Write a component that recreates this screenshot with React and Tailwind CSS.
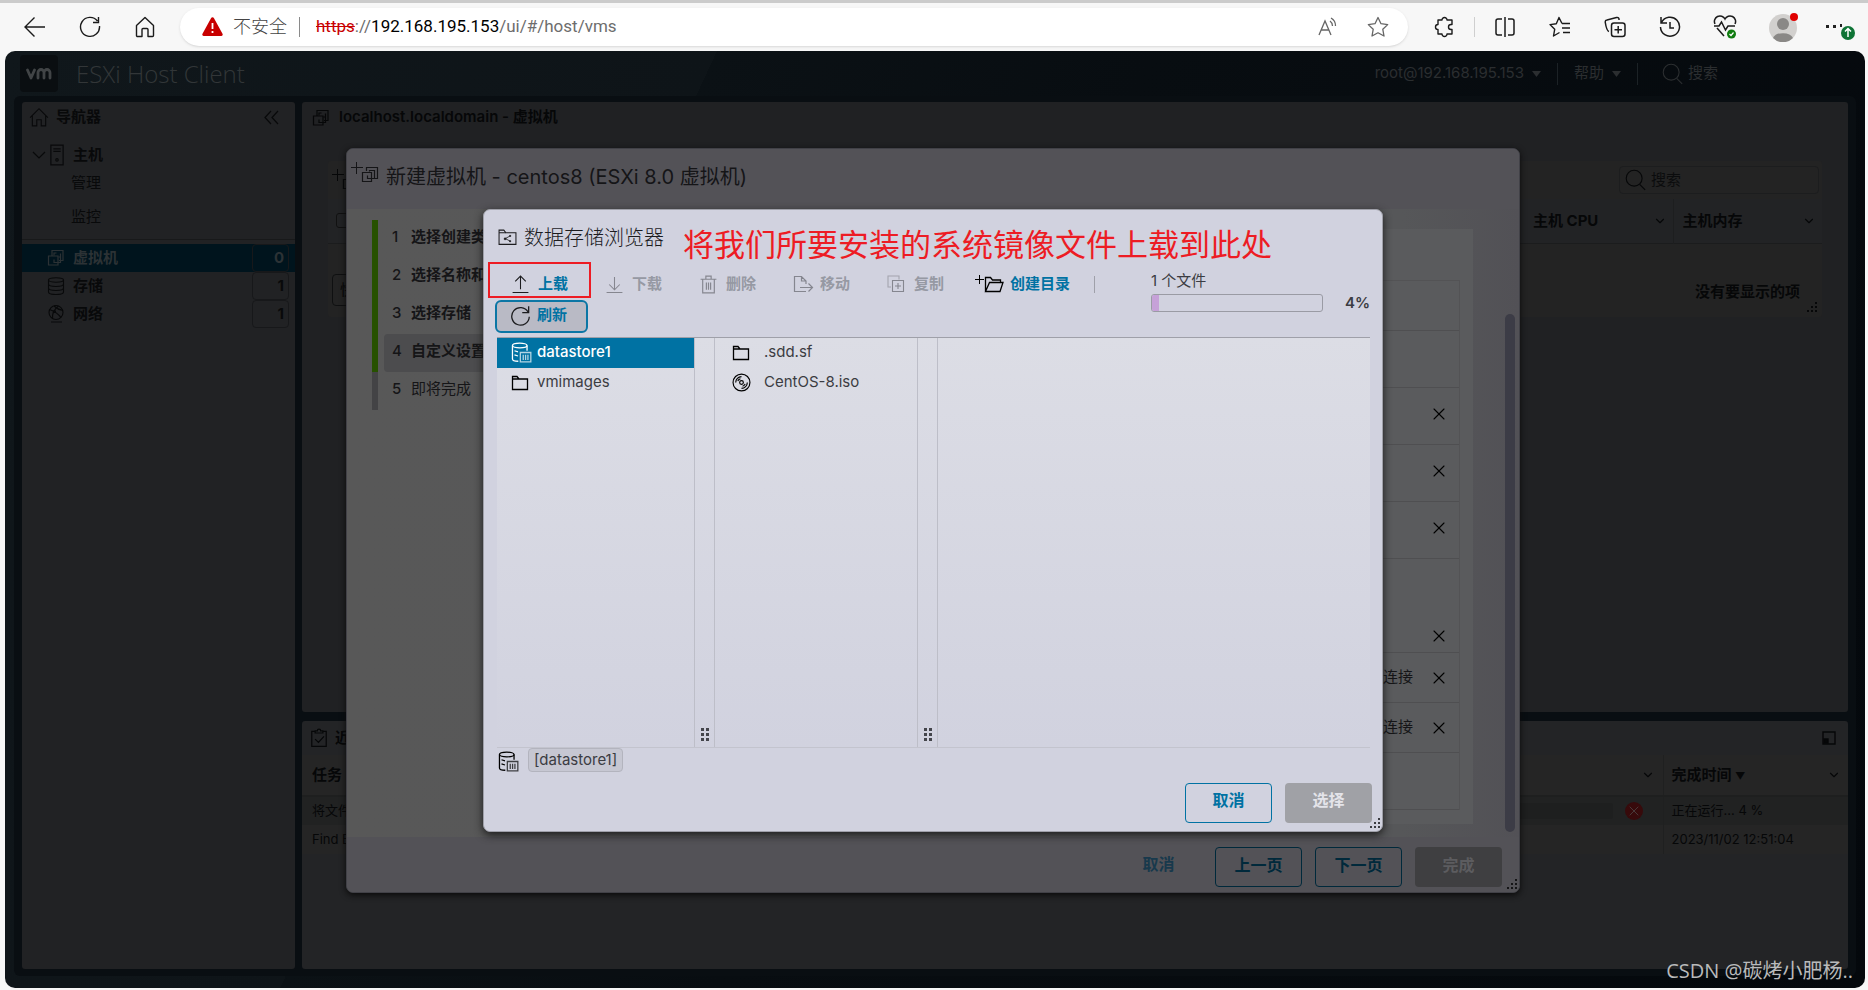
import { ChevronDown, X } from "lucide-react";

function Svg({ size = 18, sw = 2, children, className = "", box = 36 }) {
  return (
    <svg
      width={size}
      height={size}
      viewBox={`0 0 ${box} ${box}`}
      fill="none"
      stroke="currentColor"
      strokeWidth={sw}
      className={`shrink-0 ${className}`}
      aria-hidden="true"
    >
      {children}
    </svg>
  );
}

const VmIcon = ({ size = 18, className }) => (
  <Svg size={size} sw={2.4} className={className}>
    <path d="M10 13V3h22v20h-8M3 14h19v18H3z" />
    <path d="M14 13V8h5M27 9v18H14v-6M27 16h-4" />
  </Svg>
);

const NewVmIcon = ({ className = "" }) => (
  <svg width="28" height="22" viewBox="0 0 28 22" fill="none" stroke="currentColor" className={`shrink-0 ${className}`} aria-hidden="true">
    <path d="M0 5.500h12M5.500 0v12" />
    <path d="M15.500 9V5.500h11v11H23M11.500 10.500h9v9h-9zM18.500 9.500v-1h5v8h-7v-3" strokeWidth="1.200" />
  </svg>
);

const FolderIcon = () => (
  <Svg size={18} sw={2.6} className="text-black">
    <path d="M3 31V5h9l4 5h17v21zM3 10h13" />
  </Svg>
);

const DiscIcon = () => (
  <Svg size={19} sw={2.2} className="text-black">
    <circle cx="18" cy="18" r="16" />
    <circle cx="18" cy="18" r="3.500" />
    <path d="M7 18A11 11 0 0 1 18 7M11 15a8 8 0 0 1 5-4M29 18a11 11 0 0 1-11 11M25 21a8 8 0 0 1-5 4" />
  </Svg>
);

const DatastoreIcon = () => (
  <Svg size={21} sw={2.2}>
    <ellipse cx="15" cy="6" rx="12.500" ry="4" />
    <path d="M2.500 6v23c0 2 4 4 10 4M27.500 6v9M6 15l6 2M6 22l6 2" />
    <path d="M16 18h18v16H16zM21 22v9M25 22v9M29 22v9" opacity="0.7" />
  </Svg>
);

const StorageIcon = () => (
  <Svg size={18} sw={2.2}>
    <ellipse cx="18" cy="6" rx="15" ry="4.500" />
    <path d="M3 6v24c0 3 7 5 15 5s15-2 15-5V6M3 14c0 3 7 5 15 5s15-2 15-5M3 22c0 3 7 5 15 5s15-2 15-5" />
  </Svg>
);

const NetworkIcon = () => (
  <Svg size={18} sw={2.2}>
    <circle cx="18" cy="15" r="14" />
    <path d="M8 34h22M5 9c8 3 17 8 23 16M11 28c-1-10 4-20 12-26M14 2c6 6 12 8 18 9" />
    <circle cx="15" cy="13" r="2" />
  </Svg>
);

const HomeIcon = ({ size = 20 }) => (
  <Svg size={size} sw={2}>
    <path d="M2 19L18 3l16 16M6 15v19h8V23h8v11h8V15" />
  </Svg>
);

const HostIcon = () => (
  <Svg size={22} sw={2}>
    <path d="M8 2h20v32H8zM12 8h12M12 12h12" />
    <circle cx="18" cy="26" r="2" />
  </Svg>
);

const SearchIcon = ({ className }) => (
  <Svg size={22} sw={1.8} className={className}>
    <circle cx="15" cy="15" r="13" />
    <path d="M24 25l9 9" />
  </Svg>
);

const UploadIcon = () => (
  <Svg size={19} sw={2}>
    <path d="M18 27V3M8 12L18 2l10 10M3 33h30" />
  </Svg>
);

const DownloadIcon = () => (
  <Svg size={19} sw={2}>
    <path d="M18 4v23M8 18l10 10 10-10M3 33h30" />
  </Svg>
);

const TrashIcon = () => (
  <Svg size={19} sw={2.2}>
    <path d="M3 8h30M7 8v26h22V8M13 8V2h10v6M14 14v14M18 14v14M22 14v14" />
  </Svg>
);

const MoveIcon = () => (
  <svg width="21" height="19" viewBox="0 0 21 19" fill="none" stroke="currentColor" strokeWidth="1.200" className="shrink-0" aria-hidden="true">
    <path d="M13 9V6L8.500 1.500H1.500v15H13M8.500 1.500V6H13M7 12.500h12M15.500 8.500l4 4-4 4" />
  </svg>
);

const CopyIcon = () => (
  <Svg size={18} sw={2.2}>
    <path d="M8 24H2V2h22v7" opacity="0.6" />
    <path d="M11 11h22v22H11zM22 16v12M16 22h12" />
  </Svg>
);

const NewFolderIcon = () => (
  <svg width="29" height="20" viewBox="0 0 29 20" fill="none" stroke="#000" strokeWidth="1.300" className="shrink-0" aria-hidden="true">
    <path d="M0 5.500h9M4.500 1v9" strokeWidth="1" />
    <path d="M10.500 17V3.500h5l2 2.500h8v3M10.500 17.500l4-9h13.500l-3 9z" />
  </svg>
);

const RefreshIcon = () => (
  <Svg size={21} sw={2.2}>
    <path d="M31 12A15 15 0 1 0 33 20M32 2v11H21" />
  </Svg>
);

const BrowserFolderIcon = () => (
  <Svg size={19} sw={2}>
    <path d="M2 31V4h9l4 5h19v22z" />
    <path d="M2 9h13" />
    <path d="M23 15l-9 5 9 5" strokeWidth="1.500" />
    <path d="M12 19h3v3h-3zM22 14h2v2h-2zM22 24h2v2h-2z" fill="currentColor" strokeWidth="1.500" />
  </Svg>
);

const TaskIcon = () => (
  <Svg size={20} sw={2.2}>
    <path d="M11 6H5v27h26V6h-6M11 9h14V5h-4a3 3 0 0 0-6 0h-4zM11 20l6 6 10-11" />
  </Svg>
);

function Grip({ className = "" }) {
  return (
    <svg width="11" height="11" viewBox="0 0 11 11" fill="currentColor" className={className} aria-hidden="true">
      <path d="M8 0h2v2H8zM4 4h2v2H4zM8 4h2v2H8zM0 8h2v2H0zM4 8h2v2H4zM8 8h2v2H8z" />
    </svg>
  );
}

function ColumnGrip() {
  return (
    <div className="flex w-[21px] shrink-0 items-end justify-center border-x border-[#bdbec8] pb-[6px] text-[#44454b]">
      <svg width="8" height="13" viewBox="0 0 8 13" fill="currentColor" aria-hidden="true">
        <path d="M0 0h3v3H0zM5 0h3v3H5zM0 5h3v3H0zM5 5h3v3H5zM0 10h3v3H0zM5 10h3v3H5z" />
      </svg>
    </div>
  );
}

function BarButton({ label, children, className = "w-[55px]" }) {
  return (
    <button type="button" aria-label={label} className={`flex h-9 shrink-0 items-center justify-center ${className}`}>
      {children}
    </button>
  );
}

function BrowserBar() {
  return (
    <header className="border-t-[3px] border-[#cbcbcb] bg-[#f7f7f7] pt-1 pb-[5px] text-[#1b1b1b]">
      <div className="flex h-[39px] items-center">
        <div className="mr-2 ml-[7px] flex">
          <BarButton label="返回">
            <Svg size={22} sw={1.4} box={22}><path d="M1 11h20M10.500 1.500L1 11l9.500 9.500" /></Svg>
          </BarButton>
          <BarButton label="刷新页面">
            <Svg size={22} sw={1.4} box={22}><path d="M18.500 5A9.500 9.500 0 1 0 20.500 10M19.500 1v5.500H14" /></Svg>
          </BarButton>
          <BarButton label="主页">
            <Svg size={22} sw={1.4} box={22}><path d="M2.500 9.500L11 1.500l8.500 8v10a1 1 0 0 1-1 1H14v-7a1 1 0 0 0-1-1H9a1 1 0 0 0-1 1v7H3.500a1 1 0 0 1-1-1z" strokeLinejoin="round" /></Svg>
          </BarButton>
        </div>
        <div className="flex h-[38px] min-w-0 flex-1 items-center rounded-full bg-white pr-[5px] pl-[22px] font-['Roboto','Noto_Sans_CJK_SC',sans-serif] shadow-sm">
          <svg width="21" height="19" viewBox="0 0 21 19" className="shrink-0" aria-hidden="true">
            <path d="M9 1.200a1.700 1.700 0 0 1 3 0l8.500 15.500a1.500 1.500 0 0 1-1.300 2.300H1.800a1.500 1.500 0 0 1-1.300-2.300z" fill="#c80000" />
            <path d="M10.500 6v6M10.500 14v2" stroke="#fff" strokeWidth="1.800" />
          </svg>
          <span className="ml-[10px] text-[18px] font-light text-[#444]">不安全</span>
          <span className="mr-4 ml-3 h-5 w-px bg-[#8a8a8a]" />
          <span className="flex-1 text-[17px] whitespace-nowrap text-[#6d6d6d]">
            <span className="text-[#c80000] line-through">https</span>://<span className="text-black">192.168.195.153</span>/ui/#/host/vms
          </span>
          <BarButton label="大声朗读" className="w-[50px] text-[#666]">
            <Svg size={20} sw={1.3} box={20}><path d="M1 18L7 4l6 14M3 13h8M12 4a6 6 0 0 1 2.500 5M13 1a9 9 0 0 1 4.500 8" /></Svg>
          </BarButton>
          <BarButton label="收藏" className="w-[50px] text-[#666]">
            <Svg size={22} sw={1.3} box={22}><path d="M11 1.500l3 6.200 6.700.9-4.900 4.700 1.200 6.700-6-3.200-6 3.200 1.200-6.700L1.300 8.600 8 7.700z" strokeLinejoin="round" /></Svg>
          </BarButton>
        </div>
        <div className="ml-2 flex items-center">
          <BarButton label="扩展">
            <Svg size={22} sw={1.4} box={22}><path d="M5 4h4a2.500 2.500 0 1 1 5 0h5v4.500h-1a2.500 2.500 0 1 0 0 5h1V18h-5a2.500 2.500 0 1 1-5 0H5v-4.500a2.500 2.500 0 1 1 0-5z" strokeLinejoin="round" /></Svg>
          </BarButton>
          <span className="mr-[2px] ml-[3px] h-5 w-px bg-[#cfcfcf]" />
          <BarButton label="分屏">
            <Svg size={22} sw={1.5} box={22}><path d="M8 3H4a2 2 0 0 0-2 2v12a2 2 0 0 0 2 2h4M14 3h4a2 2 0 0 1 2 2v12a2 2 0 0 1-2 2h-4M11 1v20" /></Svg>
          </BarButton>
          <BarButton label="收藏夹">
            <Svg size={22} sw={1.4} box={22}><path d="M13 7.500L10 1.500 7.300 7.700 1 8.600l4.700 4.700L4.500 20l6-3.500M13 7.500h8M13 12h8M14 16.500h7" strokeLinejoin="round" /></Svg>
          </BarButton>
          <BarButton label="集锦">
            <Svg size={22} sw={1.5} box={22}><path d="M5 15.500C3 15 1.500 8 1.200 6A2 2 0 0 1 3 4l9.500-2.500A2 2 0 0 1 15 3v1" /><rect x="7.500" y="7" width="13.500" height="13.500" rx="2.500" /><path d="M14.200 10v7.500M10.500 13.700H18" /></Svg>
          </BarButton>
          <BarButton label="历史记录">
            <Svg size={22} sw={1.5} box={22}><path d="M2.500 6.500A9.500 9.500 0 1 1 1.500 11M2 1v6h6M11 6v6h4" /></Svg>
          </BarButton>
          <BarButton label="浏览器概要">
            <svg width="24" height="24" viewBox="0 0 24 24" fill="none" stroke="currentColor" strokeWidth="1.500" aria-hidden="true">
              <path d="M2 9a5 5 0 0 1 10-5 5 5 0 0 1 10 5M4 13l7 8M1 11h5l2.500-4 4 8 2.500-4h7" />
              <circle cx="18.500" cy="19" r="4.500" fill="#107c10" stroke="none" />
              <path d="M16.500 19l1.500 1.500 2.500-3" stroke="#fff" strokeWidth="1.200" />
            </svg>
          </BarButton>
          <BarButton label="个人资料" className="w-[62px]">
            <svg width="32" height="30" viewBox="0 0 32 30" aria-hidden="true">
              <circle cx="16" cy="16" r="14" fill="#d2d0ce" />
              <circle cx="16" cy="12" r="6" fill="#8a8886" />
              <path d="M6 26a10.500 7 0 0 1 20 0 14 14 0 0 1-20 0z" fill="#8a8886" />
              <circle cx="27" cy="5" r="4" fill="#e00000" />
            </svg>
          </BarButton>
          <BarButton label="设置及其他" className="w-[54px]">
            <svg width="34" height="26" viewBox="0 0 34 26" aria-hidden="true">
              <path d="M2 11h3v3H2zM9 11h3v3H9zM16 10h2v3h-2z" fill="#222" />
              <circle cx="24" cy="19" r="7" fill="#0f7436" />
              <path d="M24 23v-8M21 17.500l3-3 3 3" stroke="#fff" strokeWidth="1.500" fill="none" />
            </svg>
          </BarButton>
        </div>
      </div>
    </header>
  );
}

function Caret() {
  return (
    <svg width="9" height="6" viewBox="0 0 9 6" fill="currentColor" aria-hidden="true"><path d="M0 0h9L4.500 6z" /></svg>
  );
}

function ClientHeader() {
  return (
    <div className="flex h-[45px] shrink-0 items-center pl-[15px] text-[15px] text-[#2b2e30]">
      <div className="flex h-[37px] w-[38px] items-center justify-center rounded-[4px] bg-[#0a0e11] text-[#414446]">
        <svg width="26" height="12" viewBox="0 0 26 12" fill="none" stroke="currentColor" strokeWidth="2.800" strokeLinecap="round" strokeLinejoin="round" aria-label="vm">
          <path d="M1.500 2l3.500 8 3.500-8M12 10V4.500a2.500 2.500 0 0 1 6 0V10M18 4.500a2.500 2.500 0 0 1 6 0V10" />
        </svg>
      </div>
      <h1 className="ml-[18px] flex-1 font-['Open_Sans',sans-serif] text-[24px] font-light text-[#323638]">ESXi Host Client</h1>
      <button type="button" className="flex items-center gap-2">root@192.168.195.153 <Caret /></button>
      <span className="mx-4 h-[22px] w-px bg-[#1c2226]" />
      <button type="button" className="flex items-center gap-2">帮助 <Caret /></button>
      <span className="ml-4 h-[22px] w-px bg-[#1c2226]" />
      <label className="ml-6 flex w-[203px] items-center gap-1">
        <SearchIcon />
        <input aria-label="搜索" placeholder="搜索" className="w-24 bg-transparent placeholder:text-[#2b2e30]" />
      </label>
    </div>
  );
}

const inventory = [
  { label: "虚拟机", count: 0, icon: <VmIcon />, active: true },
  { label: "存储", count: 1, icon: <StorageIcon /> },
  { label: "网络", count: 1, icon: <NetworkIcon /> },
];

function Navigator() {
  return (
    <nav className="w-[273px] shrink-0 rounded-[3px] bg-[#212224] text-[15px] text-[#08090a]">
      <div className="flex h-[30px] items-center pr-4 pl-[7px]">
        <HomeIcon />
        <h2 className="ml-[7px] flex-1 font-bold">导航器</h2>
        <button type="button" aria-label="折叠导航器">
          <Svg size={15} sw={1.2} box={15}><path d="M7 1L1 7.500 7 14M14 1L8 7.500l6 6.500" /></Svg>
        </button>
      </div>
      <div className="mt-[10px] flex h-[26px] items-center pl-[10px]">
        <Svg size={14} sw={1.2} box={14}><path d="M1 4l6 6 6-6" /></Svg>
        <HostIcon />
        <a href="#/host" className="ml-[5px] font-bold">主机</a>
      </div>
      <a href="#/host/manage" className="flex h-[30px] items-center pl-[49px]">管理</a>
      <a href="#/host/monitor" className="flex h-[38px] items-center pl-[49px]">监控</a>
      <div className="mb-1 h-1 border-b border-[#18191a]" />
      {inventory.map((item) => (
        <a
          key={item.label}
          href="#/host/vms"
          className={`flex h-7 items-center pr-[6px] pl-[25px] font-bold ${item.active ? "bg-[#00141d] text-[#2c3235]" : ""}`}
        >
          {item.icon}
          <span className="ml-2 flex-1">{item.label}</span>
          <span className="flex h-7 w-[37px] items-center justify-end rounded-[4px] border border-[#17181a] pr-1">{item.count}</span>
        </a>
      ))}
    </nav>
  );
}

function VmPanel() {
  return (
    <section className="flex-1 rounded-[3px] bg-[#202123] text-[15px] text-[#060708]">
      <div className="flex h-[31px] items-center gap-[9px] pl-[10px]">
        <VmIcon />
        <h2 className="font-semibold">localhost.localdomain - 虚拟机</h2>
      </div>
      <div className="mt-[28px] mr-[26px] ml-[26px] rounded-[3px] bg-[#232323]">
        <div className="flex h-[38px] items-center justify-between pr-[3px] pl-1">
          <NewVmIcon />
          <label className="flex h-7 w-[200px] items-center gap-1 rounded-[4px] border border-[#1c1d1e] pl-[5px]">
            <SearchIcon />
            <input aria-label="搜索虚拟机" placeholder="搜索" className="w-36 bg-transparent placeholder:text-[#0b0c0d]" />
          </label>
        </div>
        <table className="w-full table-fixed text-left">
          <thead className="bg-[#222325]">
            <tr className="h-[44px] border-b border-[#1b1c1d]">
              <th className="pl-2">
                <input type="checkbox" aria-label="全选" className="block size-[15px] appearance-none rounded-[3px] border border-[#111]" />
              </th>
              <th className="w-[149px] border-r border-[#1d1e1f] pl-[9px] font-bold">
                <div className="flex items-center justify-between pr-[6px]">主机 CPU <ChevronDown size={14} /></div>
              </th>
              <th className="w-[149px] pl-[9px] font-bold">
                <div className="flex items-center justify-between pr-[6px]">主机内存 <ChevronDown size={14} /></div>
              </th>
            </tr>
          </thead>
          <tbody>
            <tr className="h-[74px]">
              <td className="pt-5 pl-1">
                <button type="button" className="h-8 rounded-[4px] border border-[#0f1011] px-[7px]">快速筛选器...</button>
              </td>
              <td colSpan={2} className="relative pt-6 pr-[22px] text-right font-bold">
                没有要显示的项
                <Grip className="absolute right-1 bottom-1" />
              </td>
            </tr>
          </tbody>
        </table>
      </div>
    </section>
  );
}

function TasksPanel() {
  return (
    <section className="h-[248px] shrink-0 rounded-[3px] bg-[#232426] text-[#060708]">
      <div className="flex h-[34px] items-center gap-[6px] pr-3 pl-[7px] text-[15px]">
        <TaskIcon />
        <h2 className="flex-1 font-bold">近期任务</h2>
        <button type="button" aria-label="最大化">
          <Svg size={14} sw={1.4} box={14}><path d="M1 1h12v12H1z" /><path d="M2 8h4v4H2z" fill="currentColor" /></Svg>
        </button>
      </div>
      <table className="w-full table-fixed bg-[#252525] text-left text-[13px]">
        <thead>
          <tr className="h-[41px] border-b-2 border-[#1e1f1f] text-[15px]">
            <th className="pl-[10px] font-bold">任务</th>
            <th className="w-[200px] border-r border-[#1f2020] pr-2"><ChevronDown size={14} className="ml-auto" /></th>
            <th className="w-[185px] pl-2 font-bold">
              <div className="flex items-center justify-between pr-[7px]"><span>完成时间 <span className="text-[10px]">▼</span></span> <ChevronDown size={14} /></div>
            </th>
          </tr>
        </thead>
        <tbody>
          <tr className="h-[29px] bg-[#212222]">
            <td className="pl-[10px]">将文件上载到数据存储</td>
            <td className="border-r border-[#1f2020]">
              <div className="flex items-center gap-3 pr-5">
                <span className="h-4 flex-1 rounded-[3px] bg-[#1e1f1f]" />
                <button type="button" aria-label="取消任务" className="flex size-[18px] items-center justify-center rounded-full bg-[#370a0b] text-[#4a3a3a]"><X size={16} strokeWidth={1.5} /></button>
              </div>
            </td>
            <td className="pl-2">正在运行... 4 %</td>
          </tr>
          <tr className="h-[29px]">
            <td className="pl-[10px]">Find Entity</td>
            <td className="border-r border-[#1f2020]" />
            <td className="pl-2">2023/11/02 12:51:04</td>
          </tr>
        </tbody>
      </table>
    </section>
  );
}

const steps = ["选择创建类型", "选择名称和来宾操作系统", "选择存储", "自定义设置", "即将完成"];

const hardware = [
  { height: "h-[50px]" },
  { height: "h-[57px]" },
  { height: "h-[57px]", removable: true },
  { height: "h-[57px]", removable: true },
  { height: "h-[57px]", removable: true },
  { height: "h-[94px]", removable: true, low: true },
  { height: "h-[50px]", removable: true, connect: true },
  { height: "h-[50px]", removable: true, connect: true },
  { height: "h-[57px]" },
];

function WizardDialog() {
  return (
    <div role="dialog" aria-label="新建虚拟机" className="relative w-full max-w-[1174px] overflow-hidden rounded-[7px] border border-[#414147] bg-[#565759] text-[15px] text-[#151517] shadow-[0_2px_6px_#0a0a0a]">
      <div className="flex h-[60px] items-center bg-[#535257] pl-1">
        <NewVmIcon className="mb-3" />
        <h2 className="ml-[7px] pb-1 text-[20px]">新建虚拟机 - centos8 (ESXi 8.0 虚拟机)</h2>
      </div>
      <div className="flex h-[628px] bg-[linear-gradient(90deg,#585858_0%,#565759_90%,#525156_100%)]">
        <ol className="mt-[11px] ml-[25px] w-60">
          {steps.map((s, i) => (
            <li key={s} className={`flex h-[38px] items-stretch border-l-[6px] pl-[6px] ${i < 4 ? "border-[#275100] font-bold" : "border-[#434345]"}`}>
              <div className={`flex flex-1 items-center gap-[10px] rounded-[4px] pb-1 pl-2 ${i === 3 ? "bg-[#4c4c4e]" : ""}`}>
                <span className="w-[9px] font-medium">{i + 1}</span>
                <span className="whitespace-nowrap">{s}</span>
              </div>
            </li>
          ))}
        </ol>
        <div className="mt-5 mr-[32px] mb-[13px] flex-1 bg-[#5a5b5d] pt-[51px] pr-[13px]">
          <div className="border-t border-r border-[#535355]">
            {hardware.map((h, i) => (
              <div key={i} className={`flex justify-end gap-4 border-b border-[#4f4f51] pr-[10px] ${h.low ? "items-end pb-[6px]" : h.connect ? "items-center" : "items-center pb-[5px]"} ${h.height}`}>
                {h.connect && (
                  <label className="flex items-center gap-2">
                    <input type="checkbox" defaultChecked />连接
                  </label>
                )}
                {h.removable && <button type="button" aria-label="移除" className="text-black"><X size={20} strokeWidth={1.3} /></button>}
              </div>
            ))}
          </div>
        </div>
        <div className="mt-[105px] mr-1 mb-[5px] w-[10px] rounded-full bg-[#3c3c46]" />
      </div>
      <div className="flex h-[55px] items-start justify-end gap-[13px] bg-[#535257] pt-[10px] pr-[17px] text-base font-bold">
        <button type="button" className="h-[34px] w-[87px] text-[#18394c]">取消</button>
        <button type="button" className="h-10 w-[87px] rounded-[4px] border border-[#00293b] pb-[5px] text-[#00293b]">上一页</button>
        <button type="button" className="h-10 w-[87px] rounded-[4px] border border-[#00293b] pb-[5px] text-[#00293b]">下一页</button>
        <button type="button" disabled className="h-10 w-[87px] rounded-[4px] bg-[#3f3f41] pb-[5px] text-[#5c5c5f]">完成</button>
      </div>
      <Grip className="absolute right-px bottom-[2px]" />
    </div>
  );
}

const actions = [
  { label: "上载", icon: <UploadIcon />, enabled: true },
  { label: "下载", icon: <DownloadIcon /> },
  { label: "删除", icon: <TrashIcon /> },
  { label: "移动", icon: <MoveIcon /> },
  { label: "复制", icon: <CopyIcon /> },
];

function DatastoreBrowser() {
  return (
    <div role="dialog" aria-label="数据存储浏览器" className="relative w-full max-w-[900px] rounded-[7px] border border-[#9fa0a9] bg-[#d1d2df] text-[15px] text-[#3b3c42] shadow-[0_3px_8px_#1c1c1c]">
      <h2 className="flex h-[60px] items-center gap-[7px] pb-1 pl-[14px] text-[20px] font-light text-[#1c1c1f]">
        <BrowserFolderIcon />
        数据存储浏览器
      </h2>
      <p className="absolute top-[12px] left-[199px] text-[31px] leading-[46px] whitespace-nowrap text-[#ed1c24]">
        将我们所要安装的系统镜像文件上载到此处
      </p>
      <div className="flex h-[67px] pr-3 pl-[11px] font-bold">
        <div>
          <div className="flex h-[30px] items-center pb-px">
            {actions.map((a) => (
              <button key={a.label} type="button" disabled={!a.enabled} className={`flex w-[94px] items-center pl-4 ${a.enabled ? "" : "text-[#9699a3]"}`}>
                <span className={`flex w-[27px] ${a.enabled ? "text-[#1c1c1f]" : "text-[#85868f]"}`}>{a.icon}</span>
                <span className={a.enabled ? "text-[#0072a3]" : ""}>{a.label}</span>
              </button>
            ))}
            <button type="button" className="flex items-center gap-[6px] pl-[10px]">
              <NewFolderIcon />
              <span className="text-[#0072a3]">创建目录</span>
            </button>
            <span className="ml-6 h-[17px] w-px bg-[#9fa0a9]" />
          </div>
          <button type="button" className="flex h-[33px] w-[93px] items-center gap-[6px] rounded-[6px] border-2 border-[#0b76a5] bg-[#b9bac5] pb-[2px] pl-[13px] text-[#0072a3]">
            <span className="text-[#1c1c1f]"><RefreshIcon /></span>刷新
          </button>
        </div>
        <div className="ml-auto w-[219px]">
          <label htmlFor="upload" className="block text-[15px] leading-[22px] font-normal">1 个文件</label>
          <div className="flex items-center justify-between">
            <div id="upload" role="progressbar" aria-valuenow={4} className="h-[18px] w-[172px] overflow-hidden rounded-[3px] border border-[#9a9ba4]">
              <div className="h-full bg-[#c6a1d8]" style={{ width: "4%" }} />
            </div>
            <span className="pb-px font-semibold">4%</span>
          </div>
        </div>
        <span className="absolute top-[52px] left-[4px] h-9 w-[103px] border-2 border-[#ed1c24]" />
      </div>
      <div className="mr-3 ml-[13px] flex h-[411px] border-t border-b border-t-[#9fa0a9] border-b-[#c3c4ce] bg-linear-to-b from-[#dcdde5] to-[#d1d2df]">
        <ul className="w-[197px] shrink-0">
          <li className="flex h-[30px] items-center bg-[#0072a3] pl-[14px] font-medium text-white"><span className="w-[26px]"><DatastoreIcon /></span>datastore1</li>
          <li className="flex h-[30px] items-center pl-[14px]"><span className="w-[26px]"><FolderIcon /></span>vmimages</li>
        </ul>
        <ColumnGrip />
        <ul className="w-[202px] shrink-0">
          <li className="flex h-[30px] items-center pl-[17px]"><span className="w-8"><FolderIcon /></span>.sdd.sf</li>
          <li className="flex h-[30px] items-center pl-[17px]"><span className="w-8"><DiscIcon /></span>CentOS-8.iso</li>
        </ul>
        <ColumnGrip />
      </div>
      <div className="flex items-start gap-[9px] pl-[14px]">
        <span className="pt-[3px] text-black"><DatastoreIcon /></span>
        <span className="h-6 rounded-[4px] border border-[#b3b4be] bg-[#c6c7d2] px-[5px] leading-[21px]">[datastore1]</span>
      </div>
      <div className="mt-[11px] flex justify-end gap-[13px] pr-[10px] pb-2 text-base font-bold">
        <button type="button" className="h-10 w-[87px] rounded-[4px] border border-[#0072a3] pb-[5px] text-[#0072a3]">取消</button>
        <button type="button" disabled className="h-10 w-[87px] rounded-[4px] bg-[#a0a1a6] pb-[5px] text-[#e4e4ea]">选择</button>
      </div>
      <Grip className="absolute right-px bottom-[2px]" />
    </div>
  );
}

export default function App() {
  return (
    <div className="flex min-h-screen flex-col bg-[#f7f7f7] font-['Inter','Noto_Sans_CJK_SC',sans-serif]">
      <BrowserBar />
      <main className="relative mr-[3px] mb-[2px] ml-[5px] flex flex-1 flex-col overflow-hidden rounded-[10px] bg-[#05090d] bg-[linear-gradient(115deg,#10171b_0%,#0e1418_31%,#0b1115_31%,#080d11_50%,#04080c_100%)]">
        <ClientHeader />
        <div className="mr-[9px] mb-3 ml-[9px] flex flex-1 gap-[7px] rounded-[6px] bg-[#090e12] px-2 pt-[6px] pb-[7px]">
          <Navigator />
          <div className="flex min-w-0 flex-1 flex-col gap-[9px]">
            <VmPanel />
            <TasksPanel />
          </div>
        </div>
        <div className="absolute inset-0 flex items-center justify-center pt-[2px] pr-1">
          <WizardDialog />
        </div>
        <div className="absolute inset-0 flex items-center justify-center pt-px pr-1">
          <DatastoreBrowser />
        </div>
        <span className="absolute right-3 bottom-1 font-['Open_Sans','Noto_Sans_CJK_SC',sans-serif] text-[20px] leading-[26px] text-[#b9babb]">CSDN @碳烤小肥杨..</span>
      </main>
    </div>
  );
}
